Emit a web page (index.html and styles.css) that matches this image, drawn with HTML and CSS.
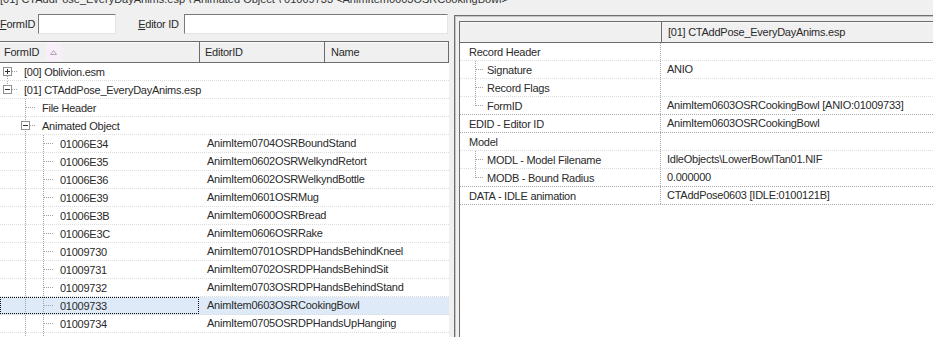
FILE: index.html
```html
<!DOCTYPE html>
<html>

<head>
    <meta charset="utf-8">
    <meta name="viewport" content="width=device-width, initial-scale=1.0">
    <link rel="stylesheet" href="styles.css">
</head>

<body>
    <div class="title">
        <div class="title-text">[01] CTAddPose_EveryDayAnims.esp \ Animated Object \ 01009733 &lt;AnimItem0603OSRCookingBowl&gt;</div>
    </div>

    <div class="main">
        <div class="left">
            <div class="filter">
                <label class="lbl"><u>F</u>ormID</label>
                <input class="edit edit-form" type="text">
                <label class="lbl lbl-ed"><u>E</u>ditor ID</label>
                <input class="edit edit-ed" type="text">
            </div>

            <div class="list">
                <div class="hdr">
                    <div class="hc hc1">FormID
                        <span class="sort">
                            <svg width="7" height="5" viewBox="0 0 7 5">
                                <path d="M0.5 4.5 L3.5 0.5 L6.5 4.5 Z" fill="none" stroke="#a9a9a9" stroke-width="1" />
                            </svg>
                        </span>
                    </div>
                    <div class="hc hc2">EditorID</div>
                    <div class="hc hc3">Name</div>
                </div>

                <div class="rows">
                    <div class="row">
                        <div class="c1"><span class="ind xf"><i class="box plus"></i></span><span class="txt">[00] Oblivion.esm</span></div>
                        <div class="c2"></div>
                    </div>
                    <div class="row">
                        <div class="c1"><span class="ind xl"><i class="box"></i></span><span class="txt">[01] CTAddPose_EveryDayAnims.esp</span></div>
                        <div class="c2"></div>
                    </div>
                    <div class="row">
                        <div class="c1"><span class="ind"></span><span class="ind t"></span><span class="txt">File Header</span></div>
                        <div class="c2"></div>
                    </div>
                    <div class="row">
                        <div class="c1"><span class="ind"></span><span class="ind xt"><i class="box"></i></span><span class="txt">Animated Object</span></div>
                        <div class="c2"></div>
                    </div>
                    <div class="row">
                        <div class="c1"><span class="ind"></span><span class="ind v"></span><span class="ind t"></span><span class="txt">01006E34</span></div>
                        <div class="c2">AnimItem0704OSRBoundStand</div>
                    </div>
                    <div class="row">
                        <div class="c1"><span class="ind"></span><span class="ind v"></span><span class="ind t"></span><span class="txt">01006E35</span></div>
                        <div class="c2">AnimItem0602OSRWelkyndRetort</div>
                    </div>
                    <div class="row">
                        <div class="c1"><span class="ind"></span><span class="ind v"></span><span class="ind t"></span><span class="txt">01006E36</span></div>
                        <div class="c2">AnimItem0602OSRWelkyndBottle</div>
                    </div>
                    <div class="row">
                        <div class="c1"><span class="ind"></span><span class="ind v"></span><span class="ind t"></span><span class="txt">01006E39</span></div>
                        <div class="c2">AnimItem0601OSRMug</div>
                    </div>
                    <div class="row">
                        <div class="c1"><span class="ind"></span><span class="ind v"></span><span class="ind t"></span><span class="txt">01006E3B</span></div>
                        <div class="c2">AnimItem0600OSRBread</div>
                    </div>
                    <div class="row">
                        <div class="c1"><span class="ind"></span><span class="ind v"></span><span class="ind t"></span><span class="txt">01006E3C</span></div>
                        <div class="c2">AnimItem0606OSRRake</div>
                    </div>
                    <div class="row">
                        <div class="c1"><span class="ind"></span><span class="ind v"></span><span class="ind t"></span><span class="txt">01009730</span></div>
                        <div class="c2">AnimItem0701OSRDPHandsBehindKneel</div>
                    </div>
                    <div class="row">
                        <div class="c1"><span class="ind"></span><span class="ind v"></span><span class="ind t"></span><span class="txt">01009731</span></div>
                        <div class="c2">AnimItem0702OSRDPHandsBehindSit</div>
                    </div>
                    <div class="row">
                        <div class="c1"><span class="ind"></span><span class="ind v"></span><span class="ind t"></span><span class="txt">01009732</span></div>
                        <div class="c2">AnimItem0703OSRDPHandsBehindStand</div>
                    </div>
                    <div class="row sel">
                        <div class="c1"><span class="ind"></span><span class="ind v"></span><span class="ind t"></span><span class="txt">01009733</span></div>
                        <div class="c2">AnimItem0603OSRCookingBowl</div>
                    </div>
                    <div class="row">
                        <div class="c1"><span class="ind"></span><span class="ind v"></span><span class="ind t"></span><span class="txt">01009734</span></div>
                        <div class="c2">AnimItem0705OSRDPHandsUpHanging</div>
                    </div>
                    <div class="row">
                        <div class="c1"><span class="ind"></span><span class="ind v"></span><span class="ind v"></span></div>
                        <div class="c2"></div>
                    </div>
                </div>
            </div>
        </div>

        <div class="right">
            <div class="rlist">
                <div class="rhdr">
                    <div class="rhc rhc1"></div>
                    <div class="rhc rhc2">[01] CTAddPose_EveryDayAnims.esp</div>
                </div>

                <div class="rrow">
                    <div class="rc1"><span class="rtxt0">Record Header</span></div>
                    <div class="rc2"></div>
                </div>
                <div class="rrow">
                    <div class="rc1"><span class="rind t"></span><span>Signature</span></div>
                    <div class="rc2">ANIO</div>
                </div>
                <div class="rrow">
                    <div class="rc1"><span class="rind t"></span><span>Record Flags</span></div>
                    <div class="rc2"></div>
                </div>
                <div class="rrow grp">
                    <div class="rc1"><span class="rind l"></span><span>FormID</span></div>
                    <div class="rc2">AnimItem0603OSRCookingBowl [ANIO:01009733]</div>
                </div>
                <div class="rrow grp">
                    <div class="rc1"><span class="rtxt0">EDID - Editor ID</span></div>
                    <div class="rc2">AnimItem0603OSRCookingBowl</div>
                </div>
                <div class="rrow">
                    <div class="rc1"><span class="rtxt0">Model</span></div>
                    <div class="rc2"></div>
                </div>
                <div class="rrow">
                    <div class="rc1"><span class="rind t"></span><span>MODL - Model Filename</span></div>
                    <div class="rc2">IdleObjects\LowerBowlTan01.NIF</div>
                </div>
                <div class="rrow grp">
                    <div class="rc1"><span class="rind l"></span><span>MODB - Bound Radius</span></div>
                    <div class="rc2">0.000000</div>
                </div>
                <div class="rrow grp">
                    <div class="rc1"><span class="rtxt0">DATA - IDLE animation</span></div>
                    <div class="rc2">CTAddPose0603 [IDLE:0100121B]</div>
                </div>
            </div>
        </div>
    </div>
</body>

</html>
```

FILE: styles.css
```css
* {
    box-sizing: border-box;
}

html,
body {
    margin: 0;
    width: 933px;
    height: 337px;
    overflow: hidden;
}

body {
    background-color: #f0f0f0;
    color: #2a2a2a;
    font-family: "Liberation Sans", Arial, sans-serif;
    font-size: 11px;
    letter-spacing: -0.25px;
    --vdot: repeating-linear-gradient(to bottom, #a3a3a3 0 1px, transparent 1px 2px);
    --hdot: repeating-linear-gradient(to right, #a3a3a3 0 1px, transparent 1px 2px);
}

/* window caption line, mostly scrolled off the top */
.title {
    height: 14px;
    overflow: hidden;
}

.title-text {
    margin-top: -7px;
    line-height: 13px;
    white-space: nowrap;
    color: #333;
    letter-spacing: 0;
}

.main {
    display: flex;
    align-items: flex-start;
    height: 323px;
}

.left {
    width: 449px;
    flex: none;
    height: 100%;
    display: flex;
    flex-direction: column;
}

/* filter bar */
.filter {
    display: flex;
    align-items: center;
    height: 20px;
}

.lbl {
    margin-right: 3px;
}

.lbl-ed {
    margin-left: 22px;
    margin-right: 5px;
}

.edit {
    height: 20px;
    margin: 0;
    padding: 0 3px;
    background: white;
    border: 1px solid;
    border-color: #7a7a7a #e3e3e3 #e3e3e3 #7a7a7a;
    font: inherit;
}

.edit-form {
    width: 78px;
}

.edit-ed {
    width: 264px;
}

/* left tree list */
.list {
    margin-top: 7px;
    flex: 1;
    background: white;
    overflow: hidden;
}

.hdr {
    display: flex;
    height: 22px;
    background: #f0f0f0;
}

.hc {
    display: flex;
    align-items: center;
    height: 22px;
    border-top: 1px solid #6c6c6c;
    border-bottom: 1px solid #6c6c6c;
    border-right: 1px solid #6c6c6c;
    box-shadow: inset 0 1px 0 #fbfbfb;
    white-space: nowrap;
}

.hc1 {
    width: 200px;
    padding-left: 4px;
}

.hc2 {
    width: 125px;
    padding-left: 5px;
}

.hc3 {
    width: 124px;
    padding-left: 6px;
}

.sort {
    display: inline-flex;
    align-items: center;
    justify-content: center;
    width: 15px;
    height: 18px;
    margin-left: 7px;
    background: #fbeefb;
}

.row {
    display: flex;
    height: 18px;
    border-bottom: 1px dotted #dcdcdc;
    white-space: nowrap;
}

.c1 {
    width: 199px;
    flex: none;
    display: flex;
    align-items: center;
}

.c2 {
    padding-left: 8px;
    line-height: 17px;
}

.txt {
    padding-left: 6px;
}

.row.sel {
    background: #deeaf8;
}

.row.sel .c1 {
    outline: 1px dotted #111;
    outline-offset: -1px;
}

/* tree connector cells */
.ind {
    width: 18px;
    height: 17px;
    flex: none;
    background-repeat: no-repeat;
}

.ind.v {
    background-image: var(--vdot);
    background-position: 7px 0;
    background-size: 1px 100%;
}

.ind.t,
.ind.xt {
    background-image: var(--vdot), var(--hdot);
    background-position: 7px 0, 8px 8px;
    background-size: 1px 100%, 10px 1px;
}

.ind.xf {
    background-image: var(--vdot), var(--hdot);
    background-position: 7px 9px, 8px 8px;
    background-size: 1px 8px, 10px 1px;
}

.ind.xl {
    background-image: var(--vdot), var(--hdot);
    background-position: 7px 0, 8px 8px;
    background-size: 1px 8px, 10px 1px;
}

.box {
    display: block;
    width: 9px;
    height: 9px;
    margin: 4px 0 0 3px;
    border: 1px solid #919191;
    background: white linear-gradient(#333, #333) center / 5px 1px no-repeat;
}

.box.plus {
    background:
        linear-gradient(#333, #333) center / 5px 1px no-repeat,
        linear-gradient(#333, #333) center / 1px 5px no-repeat,
        white;
}

/* right record view */
.right {
    flex: 1;
    height: 323px;
    margin-left: 5px;
    margin-top: 1px;
    padding: 5px 0 0 4px;
    border-left: 1px solid #707070;
    border-top: 1px solid #707070;
    box-shadow: inset 1px 1px 0 #c4c4c4;
    overflow: hidden;
}

.rlist {
    width: 600px;
    height: 100%;
    background: white;
    border-left: 1px solid #6c6c6c;
}

.rhdr {
    display: flex;
    height: 22px;
    background: #f0f0f0;
}

.rhc {
    display: flex;
    align-items: center;
    height: 22px;
    border-top: 1px solid #6c6c6c;
    border-bottom: 1px solid #6c6c6c;
    box-shadow: inset 0 1px 0 #fbfbfb;
    white-space: nowrap;
}

.rhc1 {
    width: 202px;
    border-right: 1px solid #6c6c6c;
}

.rhc2 {
    flex: 1;
    padding-left: 6px;
}

.rrow {
    display: flex;
    height: 18px;
    border-bottom: 1px dotted #dcdcdc;
    white-space: nowrap;
}

.rrow.grp {
    border-bottom-color: #a8a8a8;
}

.rc1 {
    width: 201px;
    flex: none;
    display: flex;
    align-items: center;
    border-right: 1px dotted #a8a8a8;
}

.rc2 {
    padding-left: 6px;
    line-height: 17px;
}

.rtxt0 {
    padding-left: 9px;
}

.rind {
    width: 27px;
    height: 17px;
    flex: none;
    background-repeat: no-repeat;
}

.rind.t {
    background-image: var(--vdot), var(--hdot);
    background-position: 15px 0, 16px 8px;
    background-size: 1px 100%, 8px 1px;
}

.rind.l {
    background-image: var(--vdot), var(--hdot);
    background-position: 15px 0, 16px 8px;
    background-size: 1px 9px, 8px 1px;
}
```
